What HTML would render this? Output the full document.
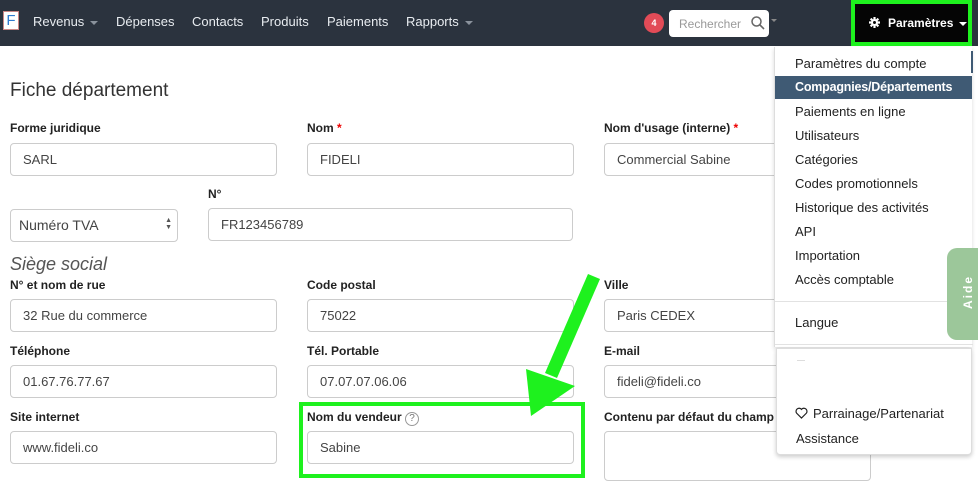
<!DOCTYPE html>
<html><head><meta charset="utf-8">
<style>
*{box-sizing:border-box}
body{margin:0;width:978px;height:486px;overflow:hidden;background:#fff;font-family:"Liberation Sans",sans-serif;color:#333;position:relative}
.nav{position:absolute;left:0;top:0;width:978px;height:46px;background:#2b333e}
.nav .l{position:absolute;top:14px;color:#e8ecf0;font-size:13px}
.car{display:inline-block;width:0;height:0;border-left:4px solid transparent;border-right:4px solid transparent;border-top:4px solid #8a929c;margin-left:6px;vertical-align:middle}
.logo{position:absolute;left:3px;top:11px;width:16px;height:19px;background:#fff;border:1px solid #c88;color:#2f7bd0;font-size:15px;line-height:17px;text-align:center}
.badge{position:absolute;left:644px;top:13px;width:20px;height:20px;border-radius:10px;background:#e24b57;color:#fff;font-size:9px;font-weight:bold;text-align:center;line-height:20px}
.search{position:absolute;left:669px;top:10px;width:100px;height:27px;background:#fff;border-radius:4px;color:#999;font-size:12px;padding:7px 10px}
.param{position:absolute;left:851px;top:0;width:121px;height:46px;background:#050505;border:4px solid #1ef11e;color:#fff;font-size:12px;font-weight:bold;padding:12px 0 0 14px}
.param .car{border-top-color:#fff}
.lab{position:absolute;font-size:12px;font-weight:bold;color:#222}
.req{color:#e00}
.in{position:absolute;height:33px;border:1px solid #ccc;border-radius:4px;font-size:13px;color:#444;padding:8px 12px;background:#fff}
h1{position:absolute;left:10px;top:80px;margin:0;font-size:19px;font-weight:normal;color:#333}
.sub{position:absolute;left:10px;top:254px;font-size:18px;font-style:italic;color:#555}
.menu{position:absolute;left:774px;top:47px;width:198px;height:300px;background:#fff;border-left:1px solid #ddd;box-shadow:0 2px 4px rgba(0,0,0,.15)}
.menu2{position:absolute;left:776px;top:348px;width:196px;height:107px;background:#fff;border:1px solid #ddd;border-radius:0 0 4px 4px;box-shadow:0 2px 4px rgba(0,0,0,.2)}
.mi{position:absolute;left:20px;font-size:13px;color:#222}
.hl{position:absolute;left:0;top:29px;width:197px;height:23px;background:#3f5a74}
.sep{position:absolute;left:0;width:198px;height:1px;background:#e2e2e2}
.aide{position:absolute;left:947px;top:248px;width:31px;height:92px;background:#9cc79a;border-radius:10px 0 0 10px}
.aide span{position:absolute;left:4px;top:37px;transform:rotate(-90deg);color:#fff;font-weight:bold;font-size:12px;letter-spacing:2px}
.gbox{position:absolute;left:299px;top:402px;width:286px;height:76px;border:4px solid #1ef11e}
</style></head><body>
<div class="nav">
 <div class="logo">F</div>
 <div class="l" style="left:33px">Revenus<span class="car"></span></div>
 <div class="l" style="left:116px">Dépenses</div>
 <div class="l" style="left:192px">Contacts</div>
 <div class="l" style="left:261px">Produits</div>
 <div class="l" style="left:327px">Paiements</div>
 <div class="l" style="left:406px">Rapports<span class="car"></span></div>
 <div class="badge">4</div>
 <div class="search">Rechercher
  <svg style="position:absolute;left:82px;top:6px" width="14" height="14" viewBox="0 0 14 14"><circle cx="5.5" cy="5.5" r="4.5" fill="none" stroke="#666" stroke-width="1.5"/><path d="M9 9l4 4" stroke="#666" stroke-width="1.6"/></svg></div>
 <div style="position:absolute;left:771px;top:19px;border-left:3px solid transparent;border-right:3px solid transparent;border-top:3px solid #888"></div>
 <div class="param"><svg width="11" height="11" viewBox="0 0 12 12" style="vertical-align:-1px;margin-right:8px"><circle cx="6" cy="6" r="3.8" fill="#fff"/><g stroke="#fff" stroke-width="2.4"><path d="M6 0v12M0 6h12M1.8 1.8l8.4 8.4M10.2 1.8l-8.4 8.4"/></g><circle cx="6" cy="6" r="1.6" fill="#050505"/></svg>Paramètres<span class="car"></span></div>
</div>

<h1>Fiche département</h1>
<div class="lab" style="left:10px;top:121px">Forme juridique</div>
<div class="in" style="left:10px;top:143px;width:267px">SARL</div>
<div class="lab" style="left:307px;top:121px">Nom <span class="req">*</span></div>
<div class="in" style="left:307px;top:143px;width:267px">FIDELI</div>
<div class="lab" style="left:604px;top:121px">Nom d'usage (interne) <span class="req">*</span></div>
<div class="in" style="left:604px;top:143px;width:267px">Commercial Sabine</div>

<div class="lab" style="left:208px;top:187px">N°</div>
<div class="in" style="left:10px;top:209px;width:168px;font-size:14px;padding:7px 8px">Numéro TVA<span style="position:absolute;right:5px;top:7px;font-size:7px;line-height:7px;color:#555">▲<br>▼</span></div>
<div class="in" style="left:208px;top:208px;width:365px">FR123456789</div>

<div class="sub">Siège social</div>
<div class="lab" style="left:10px;top:278px">N° et nom de rue</div>
<div class="in" style="left:10px;top:299px;width:267px">32 Rue du commerce</div>
<div class="lab" style="left:307px;top:278px">Code postal</div>
<div class="in" style="left:307px;top:299px;width:267px">75022</div>
<div class="lab" style="left:604px;top:278px">Ville</div>
<div class="in" style="left:604px;top:299px;width:267px">Paris CEDEX</div>

<div class="lab" style="left:10px;top:344px">Téléphone</div>
<div class="in" style="left:10px;top:365px;width:267px">01.67.76.77.67</div>
<div class="lab" style="left:307px;top:344px">Tél. Portable</div>
<div class="in" style="left:307px;top:365px;width:267px">07.07.07.06.06</div>
<div class="lab" style="left:604px;top:344px">E-mail</div>
<div class="in" style="left:604px;top:365px;width:267px">fideli@fideli.co</div>

<div class="lab" style="left:10px;top:410px">Site internet</div>
<div class="in" style="left:10px;top:431px;width:267px">www.fideli.co</div>
<div class="lab" style="left:307px;top:410px">Nom du vendeur <span style="display:inline-block;width:14px;height:14px;border:1px solid #999;border-radius:7px;font-size:10px;color:#777;text-align:center;line-height:12px;font-weight:normal">?</span></div>
<div class="in" style="left:307px;top:431px;width:267px">Sabine</div>
<div class="lab" style="left:604px;top:410px">Contenu par défaut du champ</div>
<div class="in" style="left:604px;top:431px;width:267px;height:50px"></div>

<div class="gbox"></div>
<svg style="position:absolute;left:0;top:0" width="978" height="486"><polygon points="588,274 600,279 557,378 545,373" fill="#1ef11e"/><polygon points="526,369 575,386 531,416" fill="#1ef11e"/></svg>

<div class="menu">
 <div class="hl"></div>
 <div style="position:absolute;left:196px;top:4px;width:2px;height:22px;background:#3f5a74"></div>
 <div class="mi" style="top:9px">Paramètres du compte</div>
 <div class="mi" style="top:33px;color:#fff;font-weight:bold;font-size:12.5px;letter-spacing:-0.2px">Compagnies/Départements</div>
 <div class="mi" style="top:57px">Paiements en ligne</div>
 <div class="mi" style="top:81px">Utilisateurs</div>
 <div class="mi" style="top:105px">Catégories</div>
 <div class="mi" style="top:129px">Codes promotionnels</div>
 <div class="mi" style="top:153px">Historique des activités</div>
 <div class="mi" style="top:177px">API</div>
 <div class="mi" style="top:201px">Importation</div>
 <div class="mi" style="top:225px">Accès comptable</div>
 <div class="sep" style="top:254px"></div>
 <div class="mi" style="top:268px">Langue</div>
 <div class="sep" style="top:297px"></div>
</div>
<div class="menu2">
 <div style="position:absolute;left:20px;top:11px;width:8px;height:1px;background:#ddd"></div>
 <div class="mi" style="top:57px;left:18px"><svg width="13" height="12" viewBox="0 0 14 13" style="vertical-align:-1px;margin-right:5px"><path d="M7 12L1.8 6.8A3.2 3.2 0 0 1 7 2.6a3.2 3.2 0 0 1 5.2 4.2z" fill="none" stroke="#222" stroke-width="1.3"/></svg>Parrainage/Partenariat</div>
 <div class="mi" style="top:82px;left:19px">Assistance</div>
</div>
<div class="aide"><span>Aide</span></div>
</body></html>
